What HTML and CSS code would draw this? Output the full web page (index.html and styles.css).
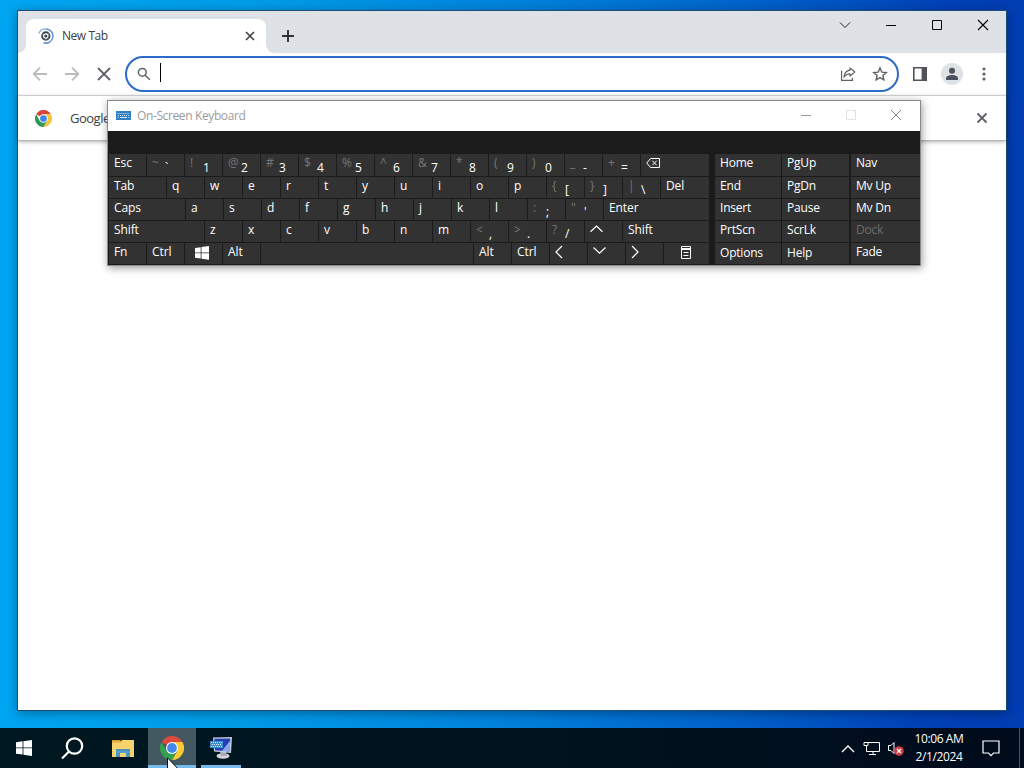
FILE: index.html
```html
<!DOCTYPE html>
<html lang="en">
<head>
    <meta charset="UTF-8">
    <meta name="viewport" content="width=device-width, initial-scale=1.0">
    <title>New Tab</title>
    <link rel="stylesheet" href="styles.css">
</head>
<body>
    <div class="desktop">
        <!-- Browser window -->
        <div class="browser">
            <div class="tabstrip">
                <div class="tab">
                    <svg class="tab-icon" width="16" height="16" viewBox="0 0 16 16" fill="none">
                        <path d="M7.5 .9A7.1 7.1 0 1 1 5.5 14.7" stroke="#5b8fd0" stroke-width="1.5"/>
                        <path d="M.8 5.5A7.3 7.3 0 0 1 7.5 .9" stroke="#86aedd" stroke-width="1.3"/>
                        <circle cx="7.8" cy="8" r="3.7" stroke="#39434f" stroke-width="1.9"/>
                        <circle cx="7.8" cy="8" r="1.6" fill="#39434f"/>
                        <path d="M7.8 6.2h3.4M6.2 9L4.5 6.2M9.4 9l-1.7 2.8" stroke="#e4e8ee" stroke-width=".6"/>
                    </svg>
                    <span class="tab-title">New Tab</span>
                    <svg width="10" height="10" viewBox="0 0 10 10"><path d="M1 1l8 8M9 1L1 9" stroke="#3c4043" stroke-width="1.6"/></svg>
                </div>
                <svg class="new-tab" width="14" height="14" viewBox="0 0 14 14"><path d="M7 1v12M1 7h12" stroke="#303338" stroke-width="1.9"/></svg>
                <div class="window-buttons">
                    <svg width="12" height="12" viewBox="0 0 12 12" fill="none" stroke="#222"><path d="M1 3.500l5 5 5-5"/></svg>
                    <svg width="12" height="12" viewBox="0 0 12 12" fill="none" stroke="#000"><path d="M1 6.500h10"/></svg>
                    <svg width="12" height="12" viewBox="0 0 12 12" fill="none" stroke="#000"><path d="M1.500 1.500h9v9h-9z"/></svg>
                    <svg width="12" height="12" viewBox="0 0 12 12" fill="none" stroke="#000" stroke-width="1.1"><path d="M1 1l10 10M11 1L1 11"/></svg>
                </div>
            </div>

            <div class="toolbar">
                <svg width="16" height="16" viewBox="0 0 16 16" fill="none" stroke="#b9bbbe" stroke-width="1.8"><path d="M15 8H2M8 1.7L1.7 8 8 14.3"/></svg>
                <svg width="16" height="16" viewBox="0 0 16 16" fill="none" stroke="#b9bbbe" stroke-width="1.8"><path d="M1 8h13M8 1.7L14.3 8 8 14.3"/></svg>
                <svg width="16" height="16" viewBox="0 0 16 16" fill="none" stroke="#5f6368" stroke-width="1.8"><path d="M2 2l12 12M14 2L2 14"/></svg>
                <div class="omnibox">
                    <svg width="14" height="14" viewBox="0 0 14 14" fill="none" stroke="#5f6368" stroke-width="1.5"><circle cx="5.3" cy="5.3" r="3.9"/><path d="M8.2 8.2l4.6 4.6"/></svg>
                    <span class="caret"></span>
                    <svg class="share" width="16" height="16" viewBox="0 0 16 16" fill="none" stroke="#5f6368" stroke-width="1.2"><path d="M1.6 4.5v9.9h10.800v-2.600"/><path d="M10 2l4.800 4L10 10V7.800C7 7.800 5.300 9 4 11.200 4.300 7.400 6.500 4.700 10 4.200z" stroke-linejoin="round"/></svg>
                    <svg width="16" height="16" viewBox="0 0 16 16" fill="none" stroke="#5f6368" stroke-width="1.4"><path d="M8 2l1.800 4.100 4.500.4-3.400 3 1 4.400L8 11.600l-3.900 2.300 1-4.400-3.400-3 4.500-.4z"/></svg>
                </div>
                <svg class="side-panel" width="14" height="14" viewBox="0 0 14 14"><path d="M0 0h14v14H0zM1.600 1.600v10.800h7V1.600z" fill="#505459" fill-rule="evenodd"/></svg>
                <div class="avatar">
                    <svg width="12" height="14" viewBox="0 0 12 14" fill="#4a525e"><circle cx="6" cy="3.800" r="3"/><path d="M0 13v-1.700C0 9.300 3 8 6 8s6 1.300 6 3.300V13z"/></svg>
                </div>
                <svg class="menu-dots" width="4" height="14" viewBox="0 0 4 14" fill="#5f6368"><circle cx="2" cy="2" r="1.600"/><circle cx="2" cy="7" r="1.600"/><circle cx="2" cy="12" r="1.600"/></svg>
            </div>

            <div class="infobar">
                <svg width="17" height="17" viewBox="0 0 48 48">
                    <circle cx="24" cy="24" r="24" fill="#fff"/>
                    <path d="M24 24L3.200 12A24 24 0 0 1 44.800 12H24z" fill="#d8443a"/>
                    <path d="M24 24L44.800 12A24 24 0 0 1 24 48L34.400 30z" fill="#f5c63c"/>
                    <path d="M24 24L34.400 30 24 48A24 24 0 0 1 3.200 12L13.600 30z" fill="#2f9a55"/>
                    <path d="M24 12h20.800L34.400 30z" fill="#f5c63c"/>
                    <circle cx="24" cy="24" r="12" fill="#fff"/>
                    <circle cx="24" cy="24" r="9.500" fill="#4285e8"/>
                </svg>
                <span class="infobar-text">Google</span>
                <svg class="infobar-close" width="12" height="12" viewBox="0 0 12 12"><path d="M1.500 1.500l9 9M10.500 1.500l-9 9" stroke="#5f6368" stroke-width="1.900"/></svg>
            </div>
            <div class="page"></div>
        </div>

        <!-- On-screen keyboard -->
        <div class="osk">
            <div class="osk-title">
                <svg width="15" height="9" viewBox="0 0 15 9"><path d="M0 0h15v9H0z" fill="#2f7fc4"/><path d="M1.500 2.500h12M2 4.500h11.500" stroke="#d4e6f5" stroke-dasharray="1 1"/><path d="M1.500 6.500h1M4 6.500h7M12.500 6.500h1" stroke="#d4e6f5"/></svg>
                <span class="osk-name">On-Screen Keyboard</span>
                <svg width="12" height="12" viewBox="0 0 12 12" fill="none" stroke="#999"><path d="M1 6.500h10"/></svg>
                <svg width="12" height="12" viewBox="0 0 12 12" fill="none" stroke="#e2e2e2"><path d="M1.500 1.500h9v9h-9z"/></svg>
                <svg width="12" height="12" viewBox="0 0 12 12" fill="none" stroke="#888"><path d="M1 1l10 10M11 1L1 11"/></svg>
            </div>
            <div class="osk-body">
                <div class="keys">
                    <div class="row first">
                        <span class="key">Esc</span>
                        <span class="key"><i>~</i><b>`</b></span>
                        <span class="key"><i>!</i><b>1</b></span>
                        <span class="key"><i>@</i><b>2</b></span>
                        <span class="key"><i>#</i><b>3</b></span>
                        <span class="key"><i>$</i><b>4</b></span>
                        <span class="key"><i>%</i><b>5</b></span>
                        <span class="key"><i>^</i><b>6</b></span>
                        <span class="key"><i>&amp;</i><b>7</b></span>
                        <span class="key"><i>*</i><b>8</b></span>
                        <span class="key"><i>(</i><b>9</b></span>
                        <span class="key"><i>)</i><b>0</b></span>
                        <span class="key"><i>_</i><b>-</b></span>
                        <span class="key"><i>+</i><b>=</b></span>
                        <span class="key fill"><svg width="14" height="12" viewBox="0 0 14 12" fill="none" stroke="#fff"><path d="M4.500 1.500h9v9h-9L.8 6zM6.300 3.700l4.400 4.600M10.700 3.700L6.300 8.300"/></svg></span>
                    </div>
                    <div class="row">
                        <span class="key tab-key">Tab</span>
                        <span class="key">q</span>
                        <span class="key">w</span>
                        <span class="key">e</span>
                        <span class="key">r</span>
                        <span class="key">t</span>
                        <span class="key">y</span>
                        <span class="key">u</span>
                        <span class="key">i</span>
                        <span class="key">o</span>
                        <span class="key">p</span>
                        <span class="key"><i>{</i><b>[</b></span>
                        <span class="key"><i>}</i><b>]</b></span>
                        <span class="key"><i>|</i><b>\</b></span>
                        <span class="key fill">Del</span>
                    </div>
                    <div class="row">
                        <span class="key caps-key">Caps</span>
                        <span class="key">a</span>
                        <span class="key">s</span>
                        <span class="key">d</span>
                        <span class="key">f</span>
                        <span class="key">g</span>
                        <span class="key">h</span>
                        <span class="key">j</span>
                        <span class="key">k</span>
                        <span class="key">l</span>
                        <span class="key"><i>:</i><b>;</b></span>
                        <span class="key"><i>"</i><b>'</b></span>
                        <span class="key fill">Enter</span>
                    </div>
                    <div class="row">
                        <span class="key shift-key">Shift</span>
                        <span class="key">z</span>
                        <span class="key">x</span>
                        <span class="key">c</span>
                        <span class="key">v</span>
                        <span class="key">b</span>
                        <span class="key">n</span>
                        <span class="key">m</span>
                        <span class="key"><i>&lt;</i><b>,</b></span>
                        <span class="key"><i>&gt;</i><b>.</b></span>
                        <span class="key"><i>?</i><b>/</b></span>
                        <span class="key"><svg width="13" height="12" viewBox="0 0 13 12" fill="none" stroke="#fff" stroke-width="1.200"><path d="M.5 7.700l6-5.700 6 5.700"/></svg></span>
                        <span class="key fill">Shift</span>
                    </div>
                    <div class="row last">
                        <span class="key">Fn</span>
                        <span class="key">Ctrl</span>
                        <span class="key win-key"><svg width="14" height="14" viewBox="0 0 14 14" fill="#fff"><path d="M0 2l5.700-.8v5.300H0zM6.500 1.100L14 0v6.500H6.500zM0 7.300h5.700v5.300L0 11.800zM6.500 7.300H14v6.500l-7.500-1z"/></svg></span>
                        <span class="key">Alt</span>
                        <span class="key space-key"></span>
                        <span class="key">Alt</span>
                        <span class="key">Ctrl</span>
                        <span class="key arrow"><svg width="8" height="14" viewBox="0 0 8 14" fill="none" stroke="#fff" stroke-width="1.200"><path d="M7 1L1 7l6 6"/></svg></span>
                        <span class="key arrow"><svg width="13" height="12" viewBox="0 0 13 12" fill="none" stroke="#fff" stroke-width="1.200"><path d="M.5 2.500l6 5.700 6-5.700"/></svg></span>
                        <span class="key arrow"><svg width="8" height="14" viewBox="0 0 8 14" fill="none" stroke="#fff" stroke-width="1.200"><path d="M1 1l6 6-6 6"/></svg></span>
                        <span class="key fill menu-key"><svg width="12" height="13" viewBox="0 0 12 13" fill="none" stroke="#fff"><path d="M1.500.5h9v12h-9zM1 2.500h10M1 3.500h10M3.500 6.500h5M3.500 9.500h5"/></svg></span>
                    </div>
                </div>
                <div class="keys nav-keys">
                    <div class="row first"><span class="key">Home</span><span class="key">PgUp</span></div>
                    <div class="row"><span class="key">End</span><span class="key">PgDn</span></div>
                    <div class="row"><span class="key">Insert</span><span class="key">Pause</span></div>
                    <div class="row"><span class="key">PrtScn</span><span class="key">ScrLk</span></div>
                    <div class="row"><span class="key low">Options</span><span class="key low">Help</span></div>
                </div>
                <div class="keys side-keys">
                    <div class="row first"><span class="key">Nav</span></div>
                    <div class="row"><span class="key">Mv Up</span></div>
                    <div class="row"><span class="key">Mv Dn</span></div>
                    <div class="row"><span class="key disabled">Dock</span></div>
                    <div class="row"><span class="key">Fade</span></div>
                </div>
            </div>
        </div>
    </div>

    <div class="taskbar">
        <div class="task start">
            <svg width="16" height="16" viewBox="0 0 16 16" fill="#fff"><path d="M0 2.200l6.600-.9v6.200H0zM7.400 1.200L16 0v7.500H7.400zM0 8.300h6.600v6.300L0 13.700zM7.400 8.300H16V16l-8.600-1.200z"/></svg>
        </div>
        <div class="task">
            <svg width="23" height="23" viewBox="0 0 23 23" fill="none" stroke="#fff" stroke-width="2.200"><circle cx="13.500" cy="9" r="7.700"/><path d="M8 14.500l-7 7"/></svg>
        </div>
        <div class="task explorer">
            <svg width="22" height="19" viewBox="0 0 22 19">
                <path d="M0 1h8l1.500 2H0z" fill="#d99a2b"/>
                <path d="M0 2h9l1-1h12v17H0z" fill="#f7d36d"/>
                <path d="M0 3h9l1-1" fill="none" stroke="#d99a2b"/>
                <path d="M4 18v-8h14v8h-4v-4H8v4z" fill="#4a94c4"/>
                <path d="M4 13h14" stroke="#68acd5"/>
            </svg>
        </div>
        <div class="task active">
            <svg width="24" height="24" viewBox="0 0 48 48">
                <path d="M24 24L3.200 12A24 24 0 0 1 44.800 12H24z" fill="#db4a3d"/>
                <path d="M24 24L44.800 12A24 24 0 0 1 24 48L34.400 30z" fill="#fbc934"/>
                <path d="M24 24L34.400 30 24 48A24 24 0 0 1 3.200 12L13.600 30z" fill="#35a04f"/>
                <path d="M24 12h20.800L34.400 30z" fill="#fbc934"/>
                <circle cx="24" cy="24" r="12" fill="#fff"/>
                <circle cx="24" cy="24" r="9.800" fill="#4387e8"/>
            </svg>
        </div>
        <div class="task open">
            <svg width="24" height="24" viewBox="0 0 24 24">
                <ellipse cx="14" cy="20" rx="6.500" ry="2.700" fill="#d4d6d8"/>
                <path d="M11 16h6l1 4h-6z" fill="#a9adb2"/>
                <path d="M4 1.500L23 1l-1 16-17-1.500z" fill="#c4cddd"/>
                <path d="M5.300 2.800l16-.3-.8 13-14.500-1.300z" fill="#2440b4"/>
                <path d="M13 14.800l8.300-10.300-.8 11z" fill="#8ea8ee"/>
                <path d="M1 5h13v7H1z" fill="#3a8bd0"/>
                <path d="M2 6.500h11M3 8.500h10M2 10.500h11" stroke="#e0effa" stroke-dasharray="1 1"/>
            </svg>
        </div>
        <div class="tray">
            <svg width="14" height="9" viewBox="0 0 14 9" fill="none" stroke="#fff" stroke-width="1.300"><path d="M1 8l6-6 6 6"/></svg>
            <svg width="17" height="15" viewBox="0 0 17 15" fill="none" stroke="#fff"><path d="M5 1.500h11.500v9H3.500V5M10 10.500v3M6 13.500h7M1 1.500h4v3H1zM3.500 5v2"/></svg>
            <svg width="18" height="15" viewBox="0 0 18 15" fill="none"><path d="M1.500 4.500H4L7 1.500v11l-3-3H1.500z" stroke="#fff"/><circle cx="12" cy="10" r="4.800" fill="#cf3b43"/><path d="M10 8l4 4M14 8l-4 4" stroke="#fff" stroke-width="1.300"/></svg>
        </div>
        <div class="clock">
            <div>10:06 AM</div>
            <div>2/1/2024</div>
        </div>
        <svg class="notify" width="18" height="17" viewBox="0 0 18 17" fill="none" stroke="#fff" stroke-width="1.200"><path d="M1 1h16v12h-5.500l-2.500 2.700L6.500 13H1z"/></svg>
        <div class="show-desktop"></div>
    </div>

    <svg class="cursor" width="12" height="19" viewBox="0 0 12 19"><path d="M.5.8v15.700l3.600-3.500 2.300 5.300 2.200-1-2.300-5.100h5z" fill="#fff" stroke="#111"/></svg>
</body>
</html>
```

FILE: styles.css
```css
body {
    margin: 0;
    width: 1024px;
    height: 768px;
    position: relative;
    overflow: hidden;
    display: flex;
    flex-direction: column;
    font-family: "Open Sans", "Noto Sans", sans-serif;
    font-size: 12px;
    color: #3c4043;
}
svg {
    display: block;
    flex: none;
}
.desktop {
    flex: 1;
    position: relative;
    background: linear-gradient(92deg, #00a6f2 0%, #009ce8 25%, #0082dc 50%, #0062cb 72%, #0041b8 90%, #003cb2 100%);
}

/* browser */
.browser {
    position: absolute;
    left: 17px;
    top: 10px;
    width: 988px;
    height: 699px;
    display: flex;
    flex-direction: column;
    background: #fff;
    border: 1px solid #1b4d77;
    box-shadow: 0 2px 10px rgba(0, 0, 0, 0.35);
}
.tabstrip {
    height: 42px;
    display: flex;
    align-items: flex-start;
    background: #dee1e6;
}
.tab {
    position: relative;
    box-sizing: border-box;
    width: 240px;
    height: 34px;
    margin: 8px 0 0 8px;
    padding: 0 11px 0 12px;
    display: flex;
    align-items: center;
    background: #fff;
    border-radius: 8px 8px 0 0;
}
.tab::before,
.tab::after {
    content: "";
    position: absolute;
    bottom: 0;
    width: 8px;
    height: 8px;
}
.tab::before {
    left: -8px;
    background: radial-gradient(circle at 0 0, #dee1e6 7.5px, #fff 8px);
}
.tab::after {
    right: -8px;
    background: radial-gradient(circle at 100% 0, #dee1e6 7.5px, #fff 8px);
}
.tab-title {
    flex: 1;
    margin-left: 8px;
    padding-bottom: 1px;
    letter-spacing: -0.45px;
}
.new-tab {
    margin: 18px 0 0 15px;
}
.window-buttons {
    display: flex;
    gap: 34px;
    margin: 8px 17px 0 auto;
}
.toolbar {
    height: 42px;
    display: flex;
    align-items: center;
    padding-left: 14px;
    gap: 16px;
    border-bottom: 1px solid #dcdcdc;
}
.omnibox {
    box-sizing: border-box;
    width: 774px;
    height: 36px;
    margin-left: -3px;
    padding: 0 9px 0 10px;
    display: flex;
    align-items: center;
    border: 2px solid #2d6bc8;
    border-radius: 18px;
}
.caret {
    width: 1px;
    height: 19px;
    margin: -3px 0 0 9px;
    background: #000;
}
.share {
    margin: 0 16px 0 auto;
}
.side-panel {
    margin-left: -2px;
}
.avatar {
    width: 22px;
    height: 22px;
    margin-left: -2px;
    display: flex;
    align-items: center;
    justify-content: center;
    background: #dee1e6;
    border-radius: 50%;
}
.menu-dots {
    margin-left: 3px;
}
.infobar {
    height: 44px;
    display: flex;
    align-items: center;
    padding: 0 18px 0 17px;
    border-bottom: 1px solid #b4b4b4;
    box-shadow: 0 1px 4px rgba(0, 0, 0, 0.3);
}
.infobar-text {
    margin-left: 18px;
    font-size: 13px;
    letter-spacing: -0.5px;
}
.infobar-close {
    margin-left: auto;
}
.page {
    flex: 1;
}

/* on-screen keyboard */
.osk {
    position: absolute;
    left: 107px;
    top: 100px;
    width: 812px;
    height: 164px;
    border: 1px solid #8a8a8a;
    background: #1b1b1b;
    box-shadow: 1px 2px 8px rgba(0, 0, 0, 0.4);
}
.osk-title {
    box-sizing: border-box;
    height: 30px;
    display: flex;
    align-items: center;
    gap: 33px;
    padding: 0 18px 2px 8px;
    background: #fff;
}
.osk-name {
    flex: 1;
    margin-left: -27px;
    color: #9b9b9b;
    letter-spacing: -0.38px;
}
.osk-body {
    display: flex;
    padding: 23px 0 0 1px;
    color: #fff;
}
.keys {
    width: 600px;
    display: flex;
    flex-direction: column;
    gap: 1px;
}
.row {
    display: flex;
    gap: 1px;
    height: 21px;
}
.row.first {
    height: 22px;
}
.key {
    box-sizing: border-box;
    width: 37px;
    flex: none;
    display: flex;
    padding-left: 5px;
    background: #323232;
    line-height: 18px;
    white-space: nowrap;
    letter-spacing: -0.1px;
}
.key svg {
    margin-top: 3px;
}
.key.arrow svg {
    margin-top: 2px;
}
.key i {
    width: 14px;
    font-style: normal;
    color: #777;
    font-size: 12px;
}
.key b {
    font-weight: normal;
    padding-top: 5px;
    margin-left: -1px;
}
.row:not(.first) .key b {
    padding-top: 4px;
}
.key.fill {
    flex: 1;
}
.tab-key {
    width: 57px;
}
.caps-key {
    width: 76px;
}
.shift-key {
    width: 95px;
}
.space-key {
    width: 212px;
}
.key.win-key {
    padding-left: 10px;
}
.key.menu-key {
    padding-left: 16px;
}
.nav-keys {
    width: 134px;
    margin-left: 6px;
}
.nav-keys .key {
    width: 66px;
    letter-spacing: -0.2px;
}
.nav-keys .key:last-child {
    width: 67px;
}
.side-keys {
    width: 69px;
    margin-left: 2px;
}
.side-keys .key {
    width: 69px;
    letter-spacing: -0.2px;
}
.key.low {
    line-height: 20px;
}
.key.disabled {
    color: #6d6d6d;
}

/* taskbar */
.taskbar {
    height: 40px;
    display: flex;
    align-items: center;
    background: linear-gradient(90deg, #001821, #00121e 60%, #000b1c);
    color: #fff;
}
.task {
    box-sizing: border-box;
    width: 48px;
    height: 40px;
    display: flex;
    align-items: center;
    justify-content: center;
    border-bottom: 3px solid transparent;
    padding-top: 3px;
}
.task.explorer {
    margin-left: 3px;
    margin-right: 1px;
}
.task.active {
    background: #435761;
    border-color: #76b9ed;
    background-clip: padding-box;
}
.task.open {
    width: 40px;
    margin-left: 5px;
    border-color: #76b9ed;
}
.tray {
    display: flex;
    align-items: center;
    gap: 8px;
    margin-left: auto;
}
.tray svg:last-child {
    margin-left: -1px;
}
.clock {
    width: 50px;
    margin-left: 9px;
    text-align: center;
    white-space: nowrap;
    line-height: 18px;
    letter-spacing: -0.4px;
}
.notify {
    margin: 0 19px 0 18px;
}
.show-desktop {
    box-sizing: border-box;
    width: 5px;
    height: 40px;
    border-left: 1px solid #4a5362;
}
.cursor {
    position: absolute;
    left: 167px;
    top: 757px;
}
```
